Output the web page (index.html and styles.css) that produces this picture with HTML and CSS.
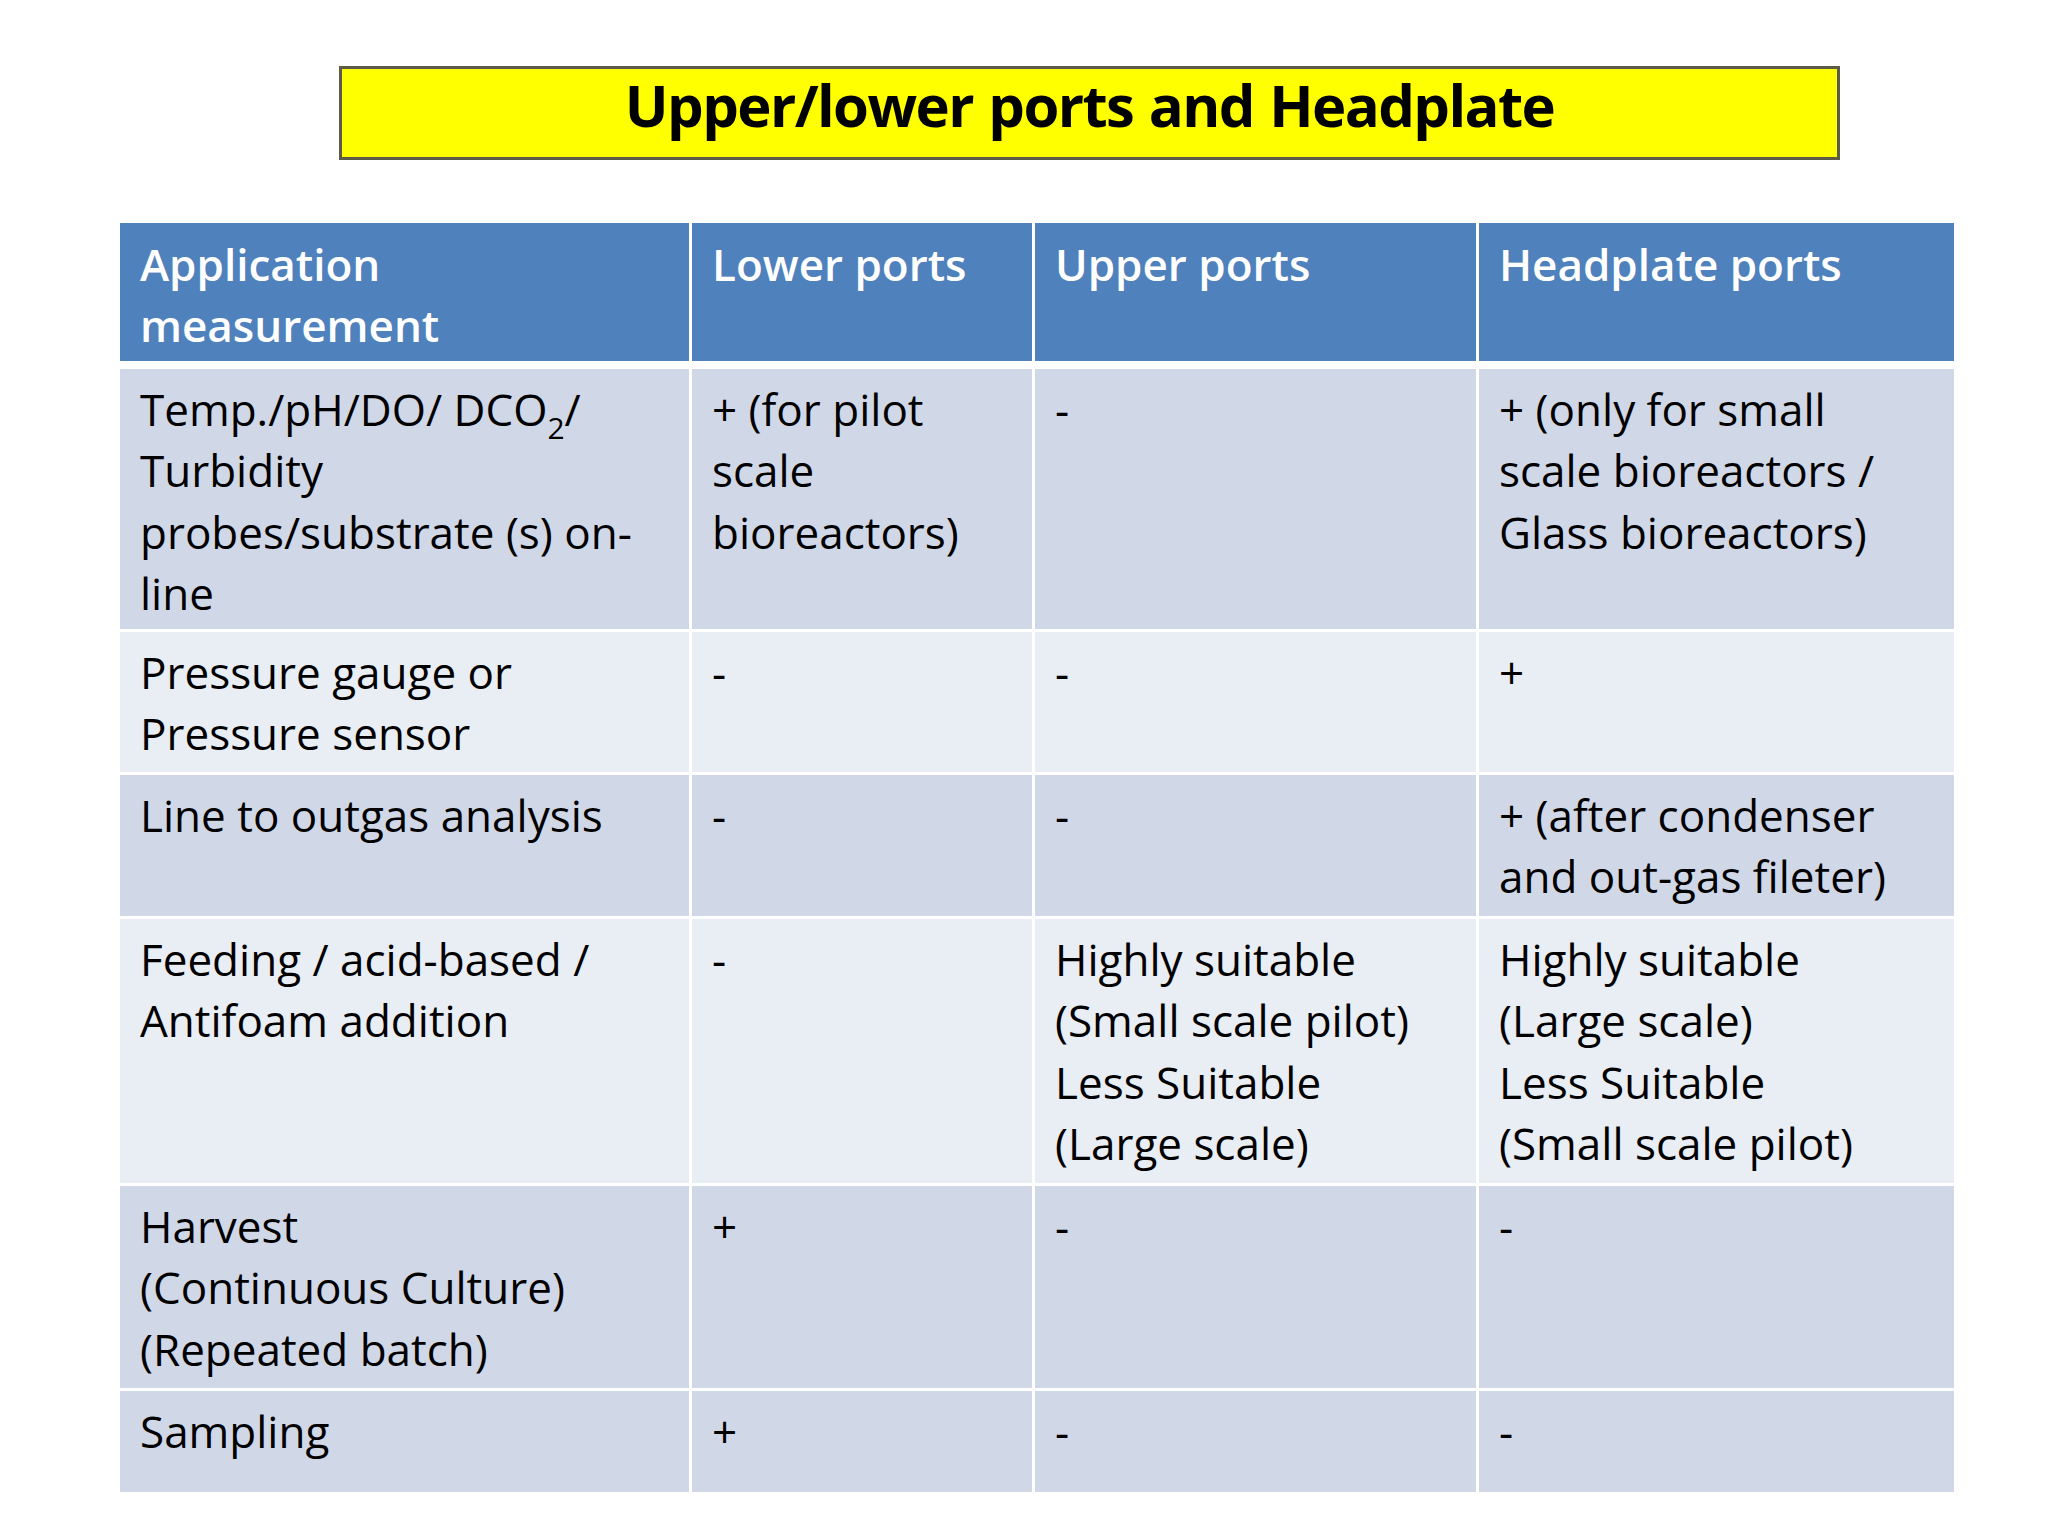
FILE: index.html
```html
<!DOCTYPE html>
<html lang="en">
<head>
<meta charset="utf-8">
<title>Upper/lower ports and Headplate</title>
<link rel="stylesheet" href="styles.css">
</head>
<body>
<main class="slide">
  <h1 class="title">Upper/lower ports and Headplate</h1>
  <div class="grid">
    <div class="cell head">Application<br>measurement</div>
    <div class="cell head">Lower ports</div>
    <div class="cell head">Upper ports</div>
    <div class="cell head">Headplate ports</div>

    <div class="cell dark r1">Temp./pH/DO/ DCO<sub>2</sub>/<br>Turbidity<br>probes/substrate (s) on-<br>line</div>
    <div class="cell dark r1">+ (for pilot<br>scale<br>bioreactors)</div>
    <div class="cell dark r1">-</div>
    <div class="cell dark r1">+ (only for small<br>scale bioreactors /<br>Glass bioreactors)</div>

    <div class="cell light r2">Pressure gauge or<br>Pressure sensor</div>
    <div class="cell light r2">-</div>
    <div class="cell light r2">-</div>
    <div class="cell light r2">+</div>

    <div class="cell dark r3">Line to outgas analysis</div>
    <div class="cell dark r3">-</div>
    <div class="cell dark r3">-</div>
    <div class="cell dark r3">+ (after condenser<br>and out-gas fileter)</div>

    <div class="cell light r4">Feeding / acid-based /<br>Antifoam addition</div>
    <div class="cell light r4">-</div>
    <div class="cell light r4">Highly suitable<br>(Small scale pilot)<br>Less Suitable<br>(Large scale)</div>
    <div class="cell light r4">Highly suitable<br>(Large scale)<br>Less Suitable<br>(Small scale pilot)</div>

    <div class="cell dark r5">Harvest<br>(Continuous Culture)<br>(Repeated batch)</div>
    <div class="cell dark r5">+</div>
    <div class="cell dark r5">-</div>
    <div class="cell dark r5">-</div>

    <div class="cell dark r6">Sampling</div>
    <div class="cell dark r6">+</div>
    <div class="cell dark r6">-</div>
    <div class="cell dark r6">-</div>
  </div>
</main>
</body>
</html>
```

FILE: styles.css
```css
html, body {
  margin: 0;
  padding: 0;
  background: #ffffff;
}

.slide {
  width: 2048px;
  height: 1536px;
  box-sizing: border-box;
  padding-top: 66px;
  font-family: "Open Sans", "Noto Sans", sans-serif;
  color: #000000;
}

.title {
  box-sizing: border-box;
  margin: 0 0 0 339px;
  width: 1501px;
  height: 94px;
  padding-top: 6px;
  background: #ffff00;
  border: 3px solid #5b5b48;
  font-size: 58px;
  font-weight: 700;
  letter-spacing: -1.6px;
  word-spacing: 2px;
  line-height: 60px;
  text-align: center;
  white-space: nowrap;
}

.grid {
  margin: 63px 0 0 120px;
  display: grid;
  grid-template-columns: 569px 340px 441px 475px;
  column-gap: 3px;
  row-gap: 3px;
}

.cell {
  box-sizing: border-box;
  padding: 10px 10px 0 20px;
  font-size: 44px;
  line-height: 61.4px;
  white-space: nowrap;
}

.cell sub {
  font-size: 30px;
  line-height: 0;
  vertical-align: -13px;
}

.head {
  height: 138px;
  margin-bottom: 5px;
  padding-top: 11px;
  background: #4f81bd;
  color: #ffffff;
  font-weight: 600;
}

.dark { background: #d0d8e8; }
.light { background: #e9edf4; }

.r1 { height: 260px; }
.r2 { height: 140px; }
.r3 { height: 141px; }
.r4 { height: 264px; }
.r5 { height: 202px; }
.r6 { height: 101px; }
```
